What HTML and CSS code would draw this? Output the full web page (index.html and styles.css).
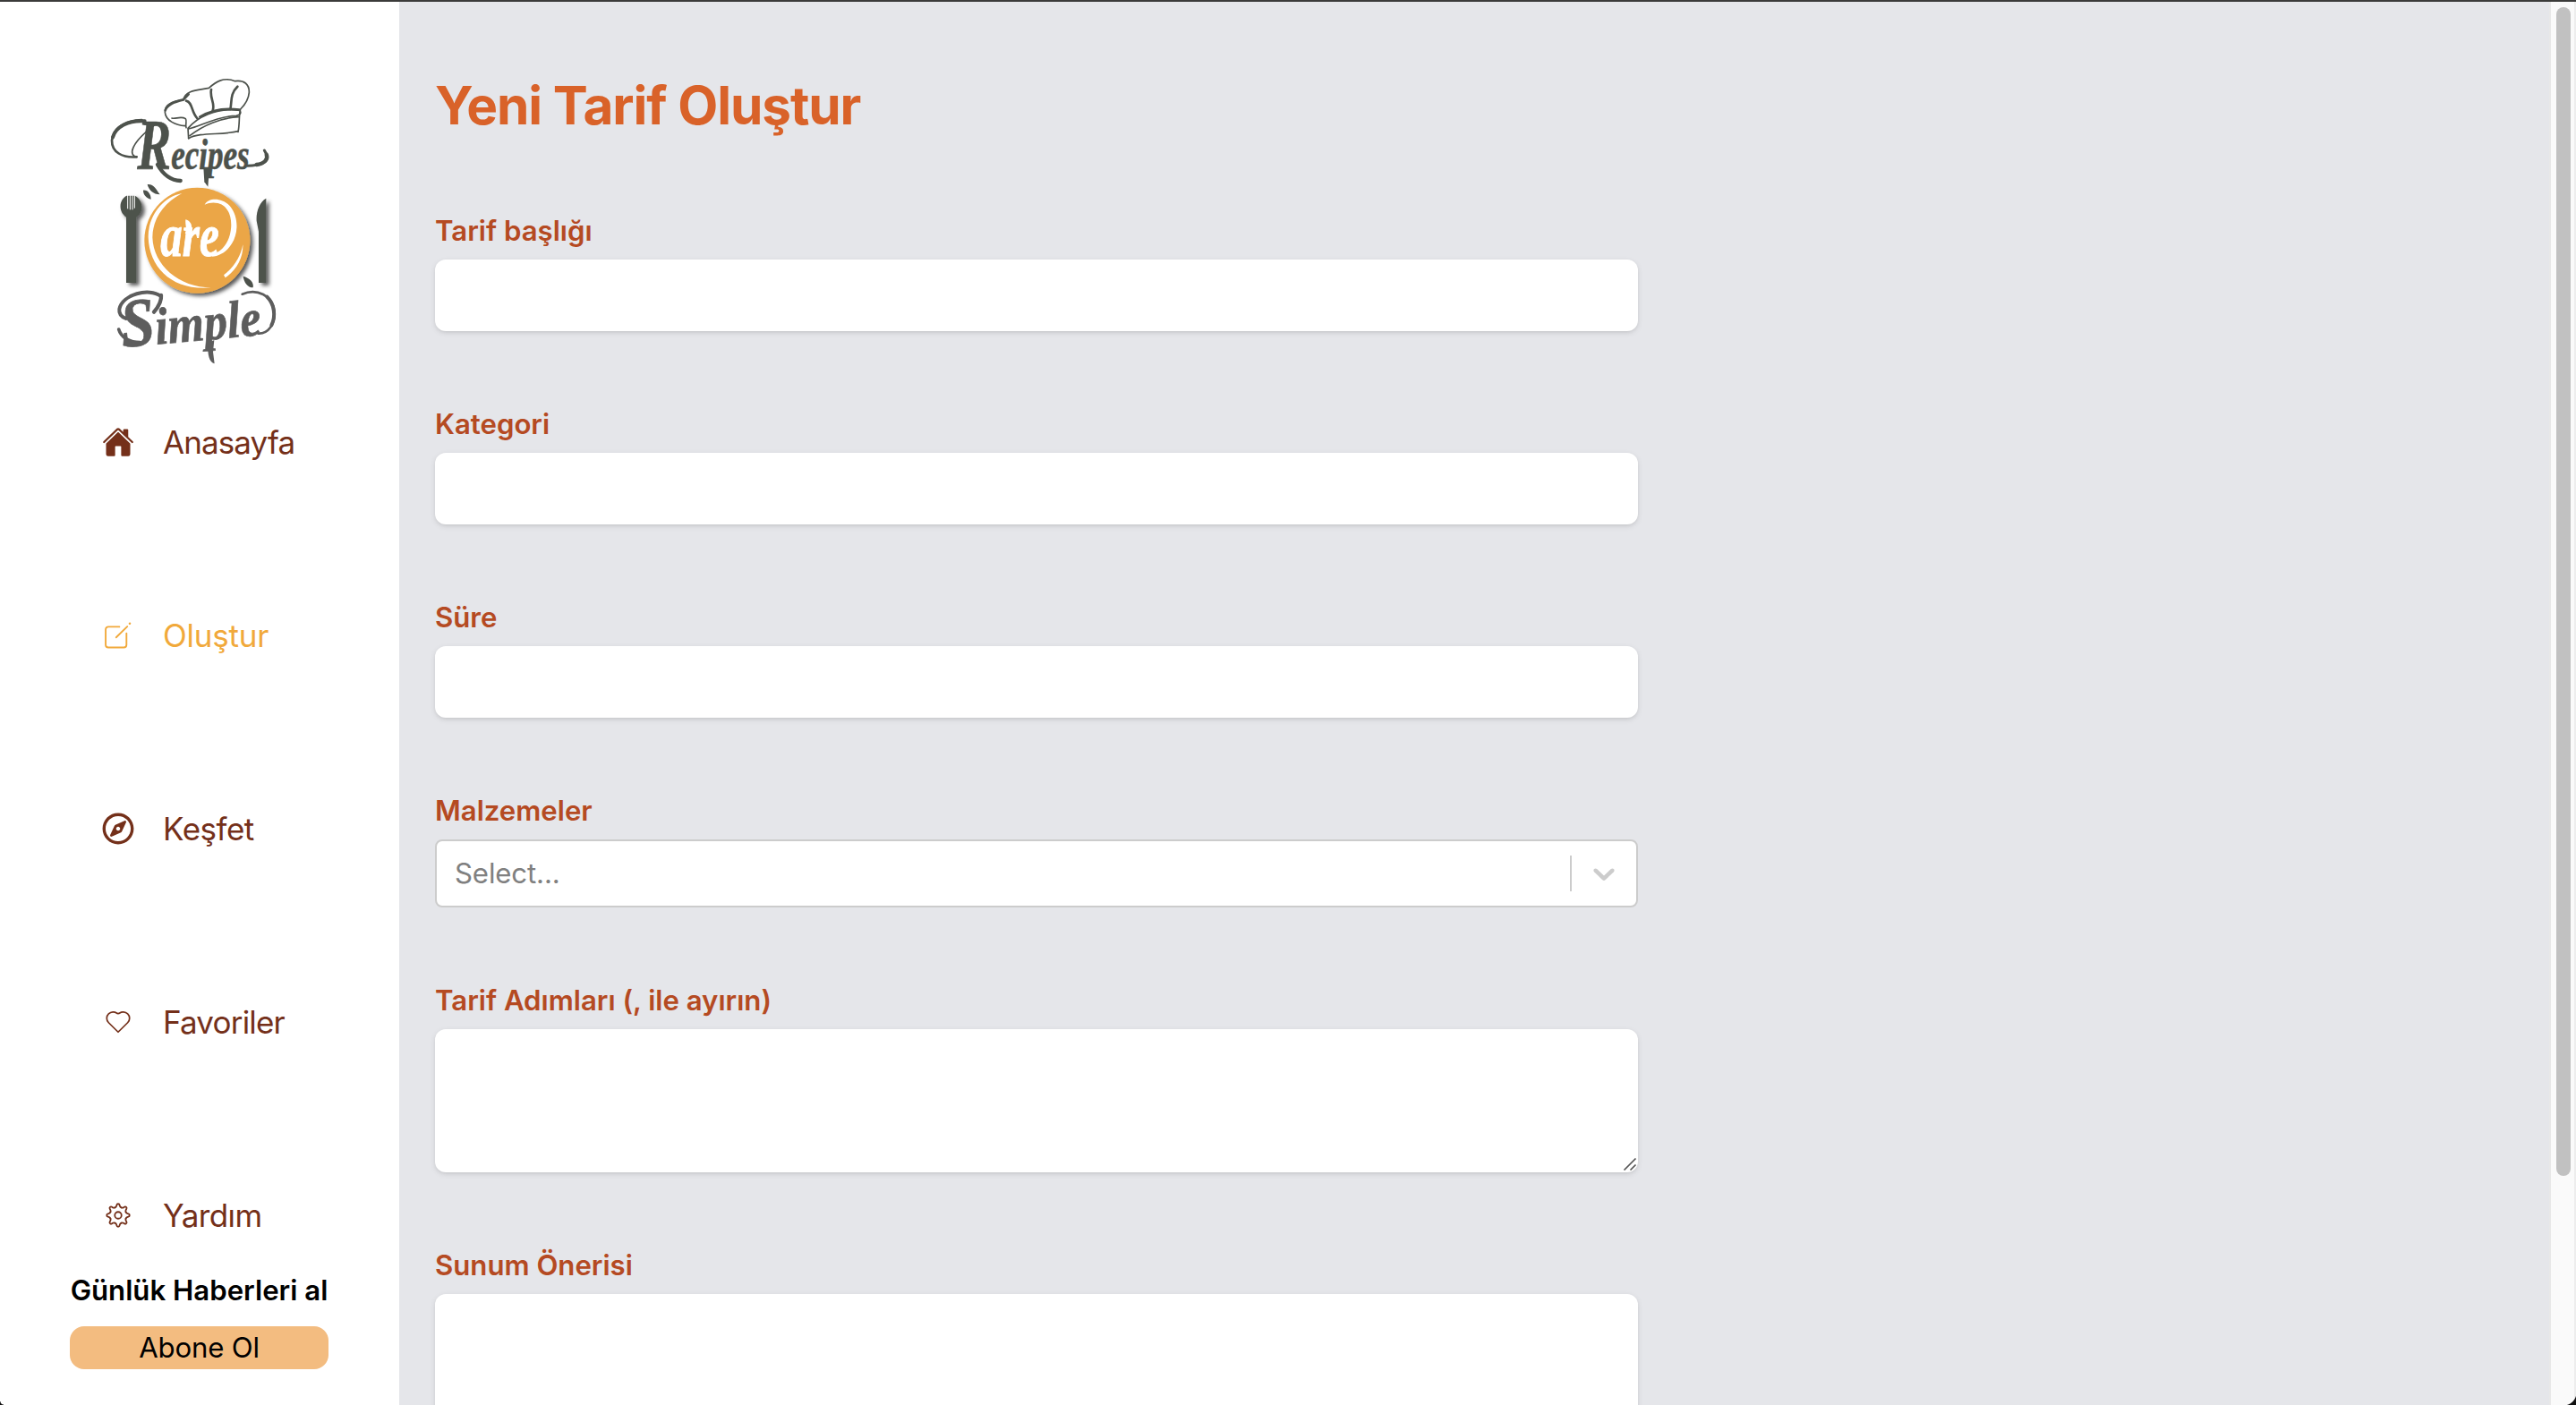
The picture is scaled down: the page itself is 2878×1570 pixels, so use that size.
FILE: index.html
```
<!DOCTYPE html>
<html lang="tr">
<head>
<meta charset="utf-8">
<title>Yeni Tarif Oluştur</title>
<link rel="stylesheet" href="styles.css">
</head>
<body>
<div class="app">
  <aside class="sidebar">
    <svg class="logo" viewBox="0 0 780 1080" role="img" aria-label="Recipes are Simple">
      <defs>
        <filter id="shade" x="-30%" y="-20%" width="170%" height="150%">
          <feDropShadow dx="10" dy="9" stdDeviation="7" flood-color="#000" flood-opacity=".65"/>
        </filter>
      </defs>
      <!-- chef hat -->
      <g fill="none" stroke="#4d524c" stroke-width="5" stroke-linecap="round" stroke-linejoin="round">
        <path d="M350 242C320 240 285 225 283 196C282 168 318 158 345 155C350 120 400 122 430 115C452 96 478 76 518 92C548 88 566 102 565 130C563 155 550 172 536 186C530 205 534 235 528 262"/>
        <path d="M306 216C318 220 336 208 352 218C358 226 350 236 354 248"/>
        <path d="M362 284L360 250C390 215 450 180 534 190C540 200 534 206 522 208C460 208 400 245 362 252"/>
        <path d="M362 284C400 262 470 274 528 260M366 275C410 240 470 215 530 212"/>
      </g>
      <g fill="none" stroke="#4d524c" stroke-width="8" stroke-linecap="round">
        <path d="M284 190C290 168 318 160 345 154L362 136"/>
        <path d="M354 158C376 162 370 195 392 218"/>
        <path d="M438 120C432 150 452 165 443 190M526 110C500 135 508 160 502 186"/>
        <path d="M400 212C440 188 490 182 532 188"/>
      </g>
      <!-- swashes around "Recipes" -->
      <g fill="none" stroke="#4d524c" stroke-linecap="round">
        <path stroke-width="8" d="M188 346C140 350 104 330 105 290C110 250 150 222 205 222"/>
        <path stroke-width="12" d="M108 280C118 246 160 222 215 226"/>
        <path stroke-width="5" d="M188 346C160 342 166 300 250 238"/>
        <path stroke-width="13" d="M258 372C275 402 300 425 335 426"/>
        <path stroke-width="9" d="M560 376C600 374 630 365 626 342L616 324"/>
        <path stroke-width="13" d="M590 372C615 368 630 355 623 338"/>
      </g>
      <text class="script" x="190" y="388" fill="#4d524c" stroke="#4d524c" stroke-width="2" font-size="148" textLength="376" lengthAdjust="spacingAndGlyphs"><tspan font-size="240">R</tspan>ecipes</text>
      <path fill="#4d524c" d="M412 380L432 380L427 446L415 430Z"/>
      <path fill="#4d524c" d="M210 458C226 456 236 472 236 488C222 484 210 474 210 458ZM224 438C246 436 254 456 266 472C244 472 228 456 224 438Z"/>
      <!-- cutlery -->
      <g fill="#4d524c" filter="url(#shade)">
        <path d="M154 476C128 490 126 530 153 548L153 768H187V548C214 532 210 490 182 476Z"/>
        <path d="M622 485C600 496 588 530 590 560L597 596V768H622Z"/>
      </g>
      <path stroke="#fff" stroke-width="3" d="M158 472V520M166 472V523M174 472V523M181 472V518"/>
      <!-- plate -->
      <circle cx="391" cy="626" r="177" fill="#eba646" filter="url(#shade)"/>
      <g fill="#fff">
        <path d="M340 468C270 482 226 550 227 615C230 720 310 796 438 784C330 784 244 710 241 616C241 555 278 500 340 468Z"/>
        <path d="M544 640C546 680 525 725 485 751L480 742C515 715 537 680 544 640Z"/>
        <path d="M416 506C430 480 475 483 500 510C530 545 530 600 507 637C492 662 465 680 440 680L440 671C470 668 492 640 501 605C512 560 500 510 460 501C443 497 430 500 416 506Z"/>
        <path d="M352 556C372 562 378 580 368 606L350 602C358 588 350 574 352 556Z"/>
      </g>
      <text class="script" x="268" y="678" font-size="202" fill="#fff" stroke="#fff" stroke-width="3" textLength="196" lengthAdjust="spacingAndGlyphs">are</text>
      <!-- swashes around "Simple" -->
      <g fill="none" stroke="#5d5d5d" stroke-linecap="round">
        <path stroke-width="12" d="M268 812C230 784 140 806 130 856C128 872 136 882 152 888"/>
        <path stroke-width="11" d="M200 968C165 968 136 952 128 924"/>
        <path stroke-width="13" d="M270 810C272 830 258 852 246 866"/>
        <path stroke-width="8" d="M542 806C590 785 645 810 650 865C652 905 630 940 595 938"/>
        <path stroke-width="12" d="M625 815C650 840 655 880 640 910"/>
      </g>
      <text class="script" transform="translate(140 984) rotate(-5)" fill="#5d5d5d" stroke="#5d5d5d" stroke-width="2" font-size="176" textLength="470" lengthAdjust="spacingAndGlyphs"><tspan font-size="232">S</tspan>imple</text>
      <path fill="#5d5d5d" d="M428 970L448 960L444 1000L449 1039C432 1036 424 1010 428 970Z"/>
      <path fill="#4d524c" d="M545 746C566 752 582 766 578 784C560 784 548 768 545 746Z"/>
    </svg>

    <nav class="nav">
      <a class="nav-item nav-item--home">
        <svg class="icon" viewBox="0 0 512 512" fill="currentColor"><path d="M261.56 101.28a8 8 0 00-11.06 0L66.4 277.15a8 8 0 00-2.47 5.79L63.9 448a32 32 0 0032 32H192a16 16 0 0016-16V328a8 8 0 018-8h80a8 8 0 018 8v136a16 16 0 0016 16h96.06a32 32 0 0032-32V282.94a8 8 0 00-2.47-5.79z"/><path d="M490.91 244.15l-74.8-71.56V64a16 16 0 00-16-16h-48a16 16 0 00-16 16v32l-57.92-55.38C272.77 35.14 264.71 32 256 32c-8.68 0-16.72 3.14-22.14 8.63l-212.7 203.5c-6.22 6-7 15.87-1.34 22.37A16 16 0 0043 267.56L250.5 69.28a8 8 0 0111.06 0l207.52 198.28a16 16 0 0022.59-.44c6.14-6.36 5.63-16.86-.76-22.97z"/></svg>
        <span>Anasayfa</span>
      </a>
      <a class="nav-item nav-item--create">
        <svg class="icon" viewBox="0 0 24 24" fill="none" stroke="currentColor" stroke-width="1.25" stroke-linecap="round"><path d="M12.9 5.6H4.7a2 2 0 0 0-2 2V19a2 2 0 0 0 2 2h11.5a2 2 0 0 0 2-2v-8.6M10.5 13.5l8.3-8.1"/><path stroke-width="1.6" d="M20.6 3.2l.1-.1"/></svg>
        <span>Oluştur</span>
      </a>
      <a class="nav-item nav-item--explore">
        <svg class="icon" viewBox="0 0 496 512" fill="currentColor"><path d="M347.94 129.86L203.6 195.83a31.938 31.938 0 0 0-15.77 15.77l-65.97 144.34c-7.61 16.65 9.54 33.81 26.2 26.2l144.34-65.97a31.938 31.938 0 0 0 15.77-15.77l65.97-144.34c7.61-16.66-9.54-33.81-26.2-26.2zm-77.36 148.72c-12.47 12.47-32.69 12.47-45.16 0-12.47-12.47-12.47-32.69 0-45.16 12.47-12.47 32.69-12.47 45.16 0 12.47 12.47 12.47 32.69 0 45.16zM248 8C111.03 8 0 119.03 0 256s111.03 248 248 248 248-111.03 248-248S384.97 8 248 8zm0 448c-110.28 0-200-89.72-200-200S137.72 56 248 56s200 89.72 200 200-89.72 200-200 200z"/></svg>
        <span>Keşfet</span>
      </a>
      <a class="nav-item nav-item--favorites">
        <svg class="icon" viewBox="0 0 24 24" fill="none" stroke="currentColor" stroke-width="1.15" stroke-linejoin="round"><path d="M12 19.5L4.9 12.5C3 10.6 3.1 7.6 4.9 5.9C6.8 4.2 9.4 4.3 10.8 5.3C11.4 5.9 12.6 5.9 13.2 5.3C14.6 4.3 17.2 4.2 19.1 5.9C20.9 7.6 21 10.6 19.1 12.5Z"/></svg>
        <span>Favoriler</span>
      </a>
      <a class="nav-item nav-item--help">
        <svg class="icon" viewBox="0 0 24 24" fill="none" stroke="currentColor" stroke-width="1.2" stroke-linecap="round">
          <defs><path id="tooth" d="M9.63 6.27Q10.6 5.87 10.8 4.9L10.9 4.4A1.12 1.12 0 0 1 13.1 4.4L13.2 4.9Q13.4 5.87 14.37 6.27"/></defs>
          <use href="#tooth"/><use href="#tooth" transform="rotate(45 12 12)"/><use href="#tooth" transform="rotate(90 12 12)"/><use href="#tooth" transform="rotate(135 12 12)"/><use href="#tooth" transform="rotate(180 12 12)"/><use href="#tooth" transform="rotate(225 12 12)"/><use href="#tooth" transform="rotate(270 12 12)"/><use href="#tooth" transform="rotate(315 12 12)"/>
          <circle cx="12" cy="12" r="2.5"/>
        </svg>
        <span>Yardım</span>
      </a>
    </nav>

    <div class="newsletter">
      <h2 class="newsletter-title">Günlük Haberleri al</h2>
      <button class="subscribe">Abone Ol</button>
    </div>
  </aside>

  <main class="main">
    <h1 class="title">Yeni Tarif Oluştur</h1>
    <form class="form">
      <label class="field"><span class="label">Tarif başlığı</span><input class="control" type="text"></label>
      <label class="field"><span class="label">Kategori</span><input class="control" type="text"></label>
      <label class="field"><span class="label">Süre</span><input class="control" type="text"></label>
      <div class="field">
        <span class="label">Malzemeler</span>
        <div class="select">
          <span class="placeholder">Select...</span>
          <span class="divider"></span>
          <svg class="chevron" viewBox="0 0 20 20" fill="currentColor"><path d="M4.516 7.548c0.436-0.446 1.043-0.481 1.576 0l3.908 3.747 3.908-3.747c0.533-0.481 1.141-0.446 1.574 0 0.436 0.445 0.408 1.197 0 1.615-0.406 0.418-4.695 4.502-4.695 4.502-0.217 0.223-0.502 0.335-0.787 0.335s-0.57-0.112-0.789-0.335c0 0-4.287-4.084-4.695-4.502s-0.436-1.17 0-1.615z"/></svg>
        </div>
      </div>
      <label class="field field--area">
        <span class="label">Tarif Adımları (, ile ayırın)</span>
        <textarea class="control control--area"></textarea>
        <svg class="grip" viewBox="0 0 16 16"><path d="M1.5 14.5L14.5 1.5M8.5 14.5L14.5 8.5"/></svg>
      </label>
      <label class="field field--area">
        <span class="label">Sunum Önerisi</span>
        <textarea class="control control--area"></textarea>
      </label>
    </form>
  </main>
  <div class="scrollbar"><div class="thumb"></div></div>
</div>
<div class="corner corner--left"></div>
<div class="corner corner--right"></div>
</body>
</html>
```
FILE: styles.css
```
* { box-sizing: border-box; margin: 0; padding: 0; }

body {
  height: 1570px;
  overflow: hidden;
  position: relative;
  background: #fff;
  font-family: Inter, "Liberation Sans", sans-serif;
}

.app {
  display: flex;
  height: 1570px;
  border-top: 2px solid #3b3b3a;
}

.sidebar {
  flex: none;
  width: 446px;
  padding-top: 58px;
  background: #fff;
}

.logo { display: block; width: 260px; height: 360px; margin-left: 90px; }
.script { font-family: "Liberation Serif", serif; font-style: italic; font-weight: 700; }

.nav {
  display: flex;
  flex-direction: column;
  gap: 160px;
  margin-top: 46px;
  padding-left: 114px;
}

.nav-item {
  display: flex;
  align-items: center;
  gap: 32px;
  height: 56px;
  color: #74301a;
  font-size: 35px;
  line-height: 56px;
}

.nav-item--home { letter-spacing: -0.9px; }
.nav-item--create { color: #f1a93b; letter-spacing: -0.2px; }
.nav-item--explore { letter-spacing: -0.5px; }
.nav-item--favorites { letter-spacing: -0.8px; }
.nav-item--help { letter-spacing: -0.6px; }

.icon { flex: none; width: 36px; height: 36px; }

.newsletter { width: 289px; margin: 32px 0 0 78px; }

.newsletter-title {
  color: #000;
  font-size: 31.2px;
  font-weight: 600;
  line-height: 48px;
  text-align: center;
  white-space: nowrap;
}

.subscribe {
  display: block;
  width: 100%;
  height: 48px;
  margin-top: 16px;
  border: 0;
  border-radius: 16px;
  background: #f3bc80;
  color: #000;
  font: 400 31.2px/48px Inter, "Liberation Sans", sans-serif;
  letter-spacing: -0.2px;
}

.main {
  flex: 1;
  min-width: 0;
  overflow: hidden;
  padding: 80px 40px 0;
  background: #e5e6ea;
}

.title {
  margin-bottom: 80px;
  color: #d96229;
  font-size: 58.5px;
  font-weight: 700;
  letter-spacing: -1.1px;
  line-height: 72px;
}

.form { display: flex; flex-direction: column; gap: 80px; width: 1344px; }
.field { display: flex; flex-direction: column; gap: 8px; }
.field--area { position: relative; }

.label {
  color: #b54a22;
  font-size: 31.2px;
  font-weight: 600;
  letter-spacing: -0.02px;
  line-height: 48px;
}

.control {
  display: block;
  width: 100%;
  height: 80px;
  border: 0;
  border-radius: 12px;
  background: #fff;
  box-shadow: 0 2px 6px rgba(0, 0, 0, .1), 0 2px 4px -2px rgba(0, 0, 0, .1);
}

.control--area { height: 160px; resize: none; }

.select {
  display: flex;
  align-items: center;
  height: 76px;
  padding: 0 16px 0 20px;
  border: 2px solid #ccc;
  border-radius: 8px;
  background: #fff;
  color: #ccc;
}

.placeholder { flex: 1; color: #808080; font-size: 31.2px; letter-spacing: -0.15px; line-height: 48px; }
.divider { width: 2px; height: 40px; background: #ccc; }
.chevron { width: 40px; height: 40px; margin-left: 16px; }

.grip {
  position: absolute;
  right: 1px;
  bottom: 1px;
  width: 16px;
  height: 16px;
  fill: none;
  stroke: #555;
  stroke-width: 1.7;
}

.scrollbar {
  flex: none;
  width: 30px;
  padding: 6px 4px 0 6px;
  border-left: 2px solid #e8e8e8;
  border-right: 2px solid #ededed;
  background: #fafafa;
}

.thumb { width: 16px; height: 1306px; border-radius: 8px; background: #c1c1c1; }

/* rounded window corners */
.corner { position: absolute; bottom: 0; }
.corner--left { left: 0; width: 4px; height: 4px; background: radial-gradient(circle at 100% 0, transparent 3px, #111 4px); }
.corner--right { right: 0; width: 14px; height: 14px; background: radial-gradient(circle at 0 0, transparent 14px, #111 15px); }
```
